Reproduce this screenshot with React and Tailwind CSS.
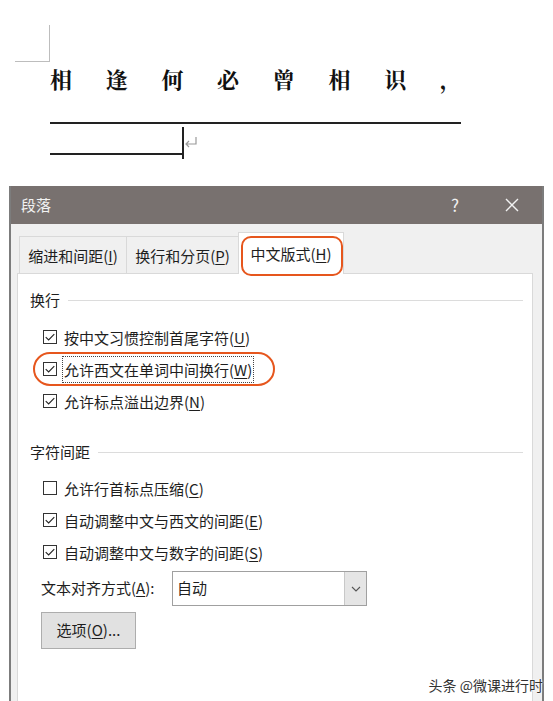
import React from "react";

const font = { fontFamily: '"Noto Sans CJK SC", "Noto Sans", sans-serif' };

function Acc({ label, k, tail = "" }) {
  // label text + accelerator key in parentheses with underline
  return (
    <span>
      {label}(<span className="underline underline-offset-2">{k}</span>){tail}
    </span>
  );
}

function CheckBox({ checked }) {
  return (
    <span className="flex h-[14px] w-[14px] shrink-0 items-center justify-center border border-[#333] bg-white">
      {checked && (
        <svg viewBox="0 0 14 14" className="h-[12px] w-[12px]">
          <path d="M2 7.2 L5.4 10.5 L12 3.6" fill="none" stroke="#222" strokeWidth="1.3" />
        </svg>
      )}
    </span>
  );
}

function Row({ checked, children, highlight }) {
  return (
    <div className="relative flex h-[32px] items-center pl-[25px]">
      {highlight && (
        <div className="pointer-events-none absolute left-[15px] top-[-1px] h-[34px] w-[242px] rounded-[17px] border-[2.5px] border-[#e6561d]" />
      )}
      <CheckBox checked={checked} />
      {highlight ? (
        <span className="ml-[5px] border border-dotted border-[#444] px-[1px] leading-[25px]">{children}</span>
      ) : (
        <span className="ml-[7px] leading-[25px]">{children}</span>
      )}
    </div>
  );
}

function Section({ title }) {
  return (
    <div className="flex h-[24px] items-center pl-[12px] pr-[9px]">
      <span>{title}</span>
      <div className="ml-[8px] h-px flex-1 bg-[#dcdcdc]" />
    </div>
  );
}

export default function App() {
  const chars = ["相", "逢", "何", "必", "曾", "相", "识", "，"];
  return (
    <div className="relative h-[701px] w-[553px] overflow-hidden bg-white" style={font}>
      {/* document area */}
      <div className="ml-[15px] mt-[25px] h-[37px] w-[35px] border-b border-r border-[#bdbdbd]" />
      <div
        className="ml-[50px] mt-[2px] flex h-[30px] items-center text-[22px] font-bold text-[#111]"
        style={{ fontFamily: '"Noto Serif CJK SC", "Noto Sans CJK SC", serif' }}
      >
        {chars.map((c, i) => (
          <span key={i} className="w-[55.7px] shrink-0 leading-[30px]">
            {c}
          </span>
        ))}
      </div>
      <div className="ml-[50px] mt-[28px] h-[2px] w-[411px] bg-[#222]" />
      <div className="ml-[50px] mt-[3px] flex items-start">
        <div className="h-[28px] w-[132px] border-b-2 border-[#222]" />
        <div className="h-[32px] w-[2px] bg-[#222]" />
        <svg viewBox="0 0 14 14" className="mt-[9px] h-[14px] w-[14px]">
          <path d="M12 1 V8 H2 M5 5 L2 8 L5 11" fill="none" stroke="#9a9a9a" strokeWidth="1.2" />
        </svg>
      </div>

      {/* dialog */}
      <div className="ml-[9px] mt-[27px] h-[520px] w-[535px] border-x-2 border-[#7c7c7c] bg-[#f0f0f0] text-[15px] text-[#1e1e1e]">
        <div className="flex h-[38px] items-center bg-[#78716f] pl-[10px] text-[#f2f2f2]">
          <span className="text-[15px]">段落</span>
          <span className="ml-auto mr-[45px] text-[17px]">?</span>
          <svg viewBox="0 0 16 16" className="mr-[22px] h-[16px] w-[16px]">
            <path d="M2 2 L14 14 M14 2 L2 14" stroke="#f2f2f2" strokeWidth="1.4" />
          </svg>
        </div>

        <div className="pl-[6px] pr-[9px]">
          {/* tabs */}
          <div className="relative z-10 ml-[2px] mt-[7px] flex h-[42px] items-end">
            <div className="flex h-[37px] w-[107px] items-center justify-center border-l border-t border-[#d9d9d9] bg-[#f0f0f0] pt-[2px]">
              <Acc label="缩进和间距" k="I" />
            </div>
            <div className="flex h-[37px] w-[112px] items-center justify-center border-l border-t border-[#d9d9d9] bg-[#f0f0f0] pt-[2px]">
              <Acc label="换行和分页" k="P" />
            </div>
            <div className="relative -mb-px flex h-[42px] w-[106px] items-center justify-center border-x border-t border-[#d9d9d9] bg-white pt-[2px]">
              <Acc label="中文版式" k="H" />
              <div className="pointer-events-none absolute left-[2px] top-[3px] h-[40px] w-[102px] rounded-[10px] border-[2.5px] border-[#e6561d]" />
            </div>
          </div>

          {/* panel */}
          <div className="h-[430px] border border-[#d9d9d9] bg-white pt-[14px]">
            <Section title="换行" />
            <div className="mt-[9px]">
              <Row checked>
                <Acc label="按中文习惯控制首尾字符" k="U" />
              </Row>
              <Row checked highlight>
                <Acc label="允许西文在单词中间换行" k="W" />
              </Row>
              <Row checked>
                <Acc label="允许标点溢出边界" k="N" />
              </Row>
            </div>

            <div className="mt-[23px]">
              <Section title="字符间距" />
            </div>
            <div className="mt-[8px]">
              <Row>
                <Acc label="允许行首标点压缩" k="C" />
              </Row>
              <Row checked>
                <Acc label="自动调整中文与西文的间距" k="E" />
              </Row>
              <Row checked>
                <Acc label="自动调整中文与数字的间距" k="S" />
              </Row>
            </div>

            <div className="mt-[3px] flex h-[35px] items-center pl-[23px]">
              <span className="w-[131px]">
                <Acc label="文本对齐方式" k="A" tail=":" />
              </span>
              <div className="flex h-[35px] w-[195px] items-stretch border border-[#a0a0a0] bg-white">
                <span className="flex flex-1 items-center pl-[4px]">自动</span>
                <span className="flex w-[22px] items-center justify-center border-l border-[#c8c8c8] bg-[#e5e5e5]">
                  <svg viewBox="0 0 10 6" className="h-[6px] w-[10px]">
                    <path d="M1 1 L5 5 L9 1" fill="none" stroke="#555" strokeWidth="1.1" />
                  </svg>
                </span>
              </div>
            </div>

            <div className="ml-[23px] mt-[6px] flex h-[37px] w-[95px] items-center justify-center border border-[#adadad] bg-[#e1e1e1]">
              <Acc label="选项" k="O" tail="..." />
            </div>
          </div>
        </div>
      </div>

      <div
        className="absolute bottom-[5px] right-[10px] text-[14px] text-[#333]"
        style={{ textShadow: "0 0 2px #fff, 0 0 2px #fff" }}
      >
        头条 @微课进行时
      </div>
    </div>
  );
}
